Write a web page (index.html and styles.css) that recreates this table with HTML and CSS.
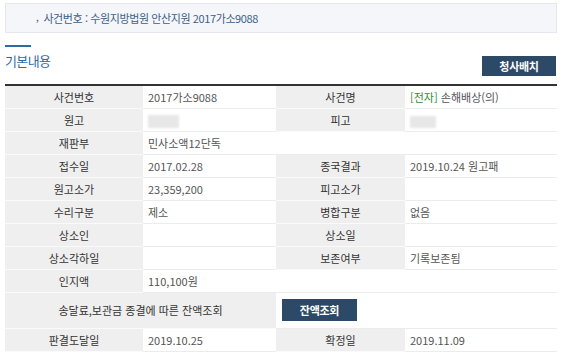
FILE: index.html
```html
<!DOCTYPE html>
<html lang="ko">
<head>
<meta charset="utf-8">
<title>사건 기본내용</title>
<link rel="stylesheet" href="styles.css">
</head>
<body>
<div class="page">
  <div class="case-box">
    <span class="case-bullet">,</span>
    <span class="case-text">사건번호 : 수원지방법원 안산지원 2017가소9088</span>
  </div>

  <div class="section-head">
    <h2 class="section-title">기본내용</h2>
    <button class="btn btn-dark btn-map" type="button">청사배치</button>
  </div>

  <table class="info-table">
    <colgroup>
      <col class="c-label1">
      <col class="c-value1">
      <col class="c-label2">
      <col class="c-value2">
    </colgroup>
    <tbody>
      <tr>
        <th>사건번호</th><td>2017가소9088</td>
        <th>사건명</th><td><span class="tag-e">[전자]</span> 손해배상(의)</td>
      </tr>
      <tr>
        <th>원고</th><td><span class="masked m-plaintiff"></span></td>
        <th>피고</th><td><span class="masked m-defendant"></span></td>
      </tr>
      <tr>
        <th>재판부</th><td colspan="3">민사소액12단독</td>
      </tr>
      <tr>
        <th>접수일</th><td>2017.02.28</td>
        <th>종국결과</th><td>2019.10.24 원고패</td>
      </tr>
      <tr>
        <th>원고소가</th><td>23,359,200</td>
        <th>피고소가</th><td></td>
      </tr>
      <tr>
        <th>수리구분</th><td>제소</td>
        <th>병합구분</th><td>없음</td>
      </tr>
      <tr>
        <th>상소인</th><td></td>
        <th>상소일</th><td></td>
      </tr>
      <tr>
        <th>상소각하일</th><td></td>
        <th>보존여부</th><td>기록보존됨</td>
      </tr>
      <tr>
        <th>인지액</th><td colspan="3">110,100원</td>
      </tr>
      <tr class="row-balance">
        <th colspan="2">송달료,보관금 종결에 따른 잔액조회</th>
        <td colspan="2"><button class="btn btn-dark btn-balance" type="button">잔액조회</button></td>
      </tr>
      <tr>
        <th>판결도달일</th><td>2019.10.25</td>
        <th>확정일</th><td>2019.11.09</td>
      </tr>
    </tbody>
  </table>
</div>
</body>
</html>
```

FILE: styles.css
```css
* {
  box-sizing: border-box;
}

html, body {
  margin: 0;
  padding: 0;
  background: #ffffff;
}

body {
  font-family: "Noto Sans CJK KR", "Noto Sans", sans-serif;
  font-size: 11px;
  color: #444;
}

.page {
  width: 567px;
  padding: 3px 10px 0 5px;
}

/* case number banner */
.case-box {
  display: flex;
  align-items: center;
  height: 30px;
  padding-left: 30px;
  background: #f5f6fa;
  border: 1px solid #e4e7ee;
  color: #3d5f86;
  letter-spacing: -0.4px;
}

.case-bullet {
  font-size: 10px;
  margin-right: 5px;
  position: relative;
  top: -2px;
}

/* section heading */
.section-head {
  display: flex;
  justify-content: space-between;
  align-items: flex-end;
  margin-top: 12px;
  margin-bottom: 8px;
}

.section-title {
  margin: 0;
  padding-bottom: 7px;
  font-size: 13px;
  font-weight: normal;
  line-height: 16px;
  color: #2f6aa3;
  letter-spacing: -0.6px;
}

.section-title::before {
  content: "";
  display: block;
  width: 26px;
  height: 2px;
  background: #2f6aa3;
  margin-bottom: 6px;
}

.btn {
  font-family: inherit;
  border: 0;
  padding: 0;
  cursor: pointer;
}

.btn-dark {
  background: #2c4a67;
  color: #ffffff;
  font-size: 11px;
  font-weight: bold;
  letter-spacing: -0.3px;
}

.btn-map {
  width: 74px;
  height: 20px;
  margin-right: 1px;
}

/* detail table */
.info-table {
  width: 552px;
  border-collapse: collapse;
  border-top: 2px solid #333;
  table-layout: fixed;
}

.c-label1 { width: 138px; }
.c-value1 { width: 133px; }
.c-label2 { width: 129px; }
.c-value2 { width: 152px; }

.info-table th,
.info-table td {
  height: 23px;
  padding: 0 5px;
  border-bottom: 1px solid #ececec;
  font-size: 11px;
  white-space: nowrap;
}

.info-table th {
  background: #efefef;
  color: #333;
  font-weight: normal;
  text-align: center;
  border-bottom-color: #fafafa;
}

.info-table td {
  color: #555;
  text-align: left;
}

.row-balance th,
.row-balance td {
  height: 36px;
}

.row-balance td {
  padding-left: 6px;
}

.btn-balance {
  width: 75px;
  height: 22px;
  display: block;
}

.tag-e {
  color: #2e8b3a;
}

.masked {
  display: inline-block;
  vertical-align: middle;
  background: #e7e7e7;
  filter: blur(1px);
}

.m-plaintiff {
  width: 31px;
  height: 13px;
}

.m-defendant {
  width: 26px;
  height: 12px;
}
```
